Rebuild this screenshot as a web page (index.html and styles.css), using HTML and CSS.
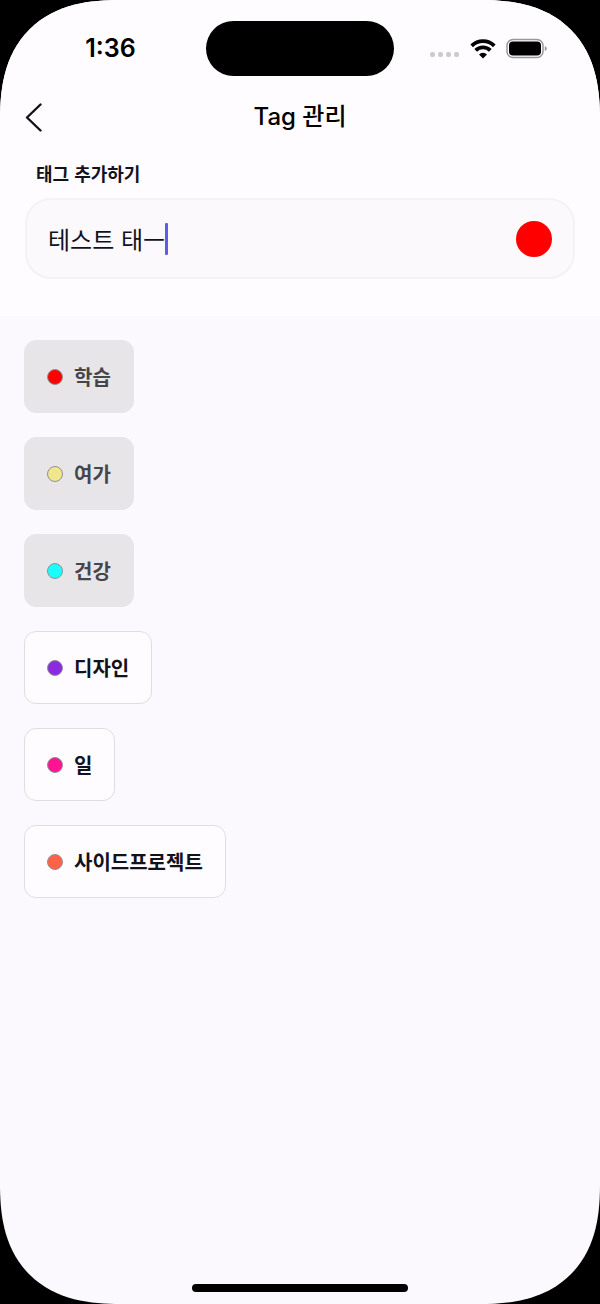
FILE: index.html
```html
<!DOCTYPE html>
<html lang="ko">
<head>
  <meta charset="UTF-8">
  <meta name="viewport" content="width=device-width, initial-scale=1.0">
  <title>Tag 관리</title>
  <link rel="stylesheet" href="styles.css">
</head>
<body>
  <div class="screen">
    <div class="top">
      <div class="status-bar">
        <div class="time">1:36</div>
        <div class="island"></div>
        <div class="status-icons">
          <svg class="signal" width="30" height="22" viewBox="0 0 30 22">
            <g fill="#cbcacd">
              <rect x="0" y="14" width="5" height="5" rx="2"/>
              <rect x="8" y="14" width="5" height="5" rx="2"/>
              <rect x="16" y="14" width="5" height="5" rx="2"/>
              <rect x="24" y="14" width="5" height="5" rx="2"/>
            </g>
          </svg>
          <svg class="wifi" width="26" height="22" viewBox="0 0 26 22">
            <g fill="none" stroke="#000" stroke-width="3.8">
              <path d="M1.7 7.8 A16.2 16.2 0 0 1 24.3 7.8"/>
              <path d="M5.7 12.4 A10.3 10.3 0 0 1 20.3 12.4"/>
            </g>
            <path d="M13 20.4 L9 16.4 A5.7 5.7 0 0 1 17 16.4 Z" fill="#000"/>
          </svg>
          <svg class="battery" width="42" height="22" viewBox="0 0 42 22">
            <rect x="1" y="1.5" width="36" height="18" rx="6" fill="none" stroke="#98979a" stroke-width="1.5"/>
            <rect x="3" y="3.5" width="32" height="14" rx="4" fill="#000"/>
            <path d="M38.8 8 Q40.8 8.8 40.8 10.5 Q40.8 12.2 38.8 13 Z" fill="#98979a"/>
          </svg>
        </div>
      </div>

      <header class="nav">
        <button class="back" type="button" aria-label="뒤로">
          <svg width="18" height="30" viewBox="0 0 18 30">
            <path d="M16.5 2.5 L3 15.5 L16.5 28.5" fill="none" stroke="#12121c" stroke-width="2.4" stroke-linecap="round" stroke-linejoin="round"/>
          </svg>
        </button>
        <h1 class="title">Tag 관리</h1>
      </header>

      <form class="add-form">
        <label class="add-label" for="tagName">태그 추가하기</label>
        <div class="field">
          <div class="typing">
            <input class="tag-input" type="text" id="tagName" value="테스트 태ㅡ">
            <span class="caret"></span>
          </div>
          <button class="color-pick" type="button" aria-label="색상"></button>
        </div>
      </form>
    </div>

    <main class="tags">
      <button class="tag selected" type="button"><span class="dot red"></span>학습</button>
      <button class="tag selected" type="button"><span class="dot khaki"></span>여가</button>
      <button class="tag selected" type="button"><span class="dot cyan"></span>건강</button>
      <button class="tag" type="button"><span class="dot violet"></span>디자인</button>
      <button class="tag" type="button"><span class="dot pink"></span>일</button>
      <button class="tag" type="button"><span class="dot tomato"></span>사이드프로젝트</button>
    </main>

    <div class="home-bar"></div>
  </div>
</body>
</html>
```
FILE: styles.css
```css
* {
  box-sizing: border-box;
}
body {
  margin: 0;
  background-color: #000;
  color: #12121c;
  font-family: "Noto Sans CJK KR", sans-serif;
}
button, input {
  font-family: inherit;
  color: inherit;
  border: none;
  padding: 0;
  background: none;
}
button {
  cursor: pointer;
}
svg {
  display: block;
}
.screen {
  min-height: 100vh;
  display: flex;
  flex-direction: column;
  background-color: #fbf9fd;
  border-radius: 100px;
  overflow: hidden;
}
/* smoother device corner where the browser can draw it */
@supports (corner-shape: superellipse(1.3)) {
  .screen {
    border-radius: 120px;
    corner-shape: superellipse(1.3);
  }
}
.top {
  background-color: #fefcff;
  padding-bottom: 37px;
}

/* status bar */
.status-bar {
  display: grid;
  grid-template-columns: 1fr 188px 1fr;
  align-items: center;
  padding-top: 21px;
}
.time {
  padding-left: 15px;
  text-align: center;
  font-family: Inter, sans-serif;
  font-size: 25px;
  font-weight: 600;
  line-height: 55px;
  color: #000;
}
.island {
  height: 55px;
  border-radius: 28px;
  background-color: #000;
}
.status-icons {
  display: flex;
  align-items: center;
  justify-content: flex-end;
  gap: 10px;
  padding-right: 52px;
}

/* title row */
.nav {
  display: grid;
  grid-template-columns: 1fr auto 1fr;
  align-items: center;
  padding: 21px 24px 0;
}
.back {
  justify-self: start;
}
.title {
  margin: 0;
  font-family: Inter, "Noto Sans CJK KR", sans-serif;
  font-size: 24px;
  font-weight: 500;
  line-height: 40px;
  color: #000;
}

/* add form */
.add-form {
  padding: 23px 25px 0;
}
.add-label {
  display: block;
  padding-left: 11px;
  margin-bottom: 12px;
  font-size: 18px;
  font-weight: 700;
  line-height: 26px;
}
.field {
  display: flex;
  align-items: center;
  justify-content: space-between;
  height: 81px;
  padding: 0 21px;
  border: 2px solid #f4f2f5;
  border-radius: 26px;
  background-color: #fbf9fc;
}
.typing {
  display: flex;
  align-items: center;
}
.tag-input {
  field-sizing: content;
  font-size: 24px;
  line-height: 34px;
  outline: none;
}
.caret {
  width: 3px;
  height: 32px;
  border-radius: 1px;
  background-color: #625bea;
}
.color-pick {
  width: 36px;
  height: 36px;
  border-radius: 50%;
  background-color: #ff0000;
}

/* tag list */
.tags {
  flex: 1;
  display: flex;
  flex-direction: column;
  align-items: flex-start;
  gap: 24px;
  padding: 24px;
}
.tag {
  display: flex;
  align-items: center;
  gap: 11px;
  padding: 23px 22px;
  border: 1px solid #dfdde1;
  border-radius: 12px;
  background-color: #fefcff;
  font-size: 20px;
  font-weight: 700;
  line-height: 25px;
}
.tag.selected {
  border-color: #e7e5e8;
  background-color: #e7e5e8;
  color: #464549;
}
.dot {
  width: 16px;
  height: 16px;
  border: 1px solid #929194;
  border-radius: 50%;
}
.red {
  background-color: #ff0000;
}
.khaki {
  background-color: #f0e68c;
}
.cyan {
  background-color: #18ffff;
}
.violet {
  background-color: #8a2be2;
}
.pink {
  background-color: #ff1493;
}
.tomato {
  background-color: #ff6347;
}

.home-bar {
  align-self: center;
  width: 36%;
  height: 8px;
  margin-bottom: 12px;
  border-radius: 4px;
  background-color: #000;
}
```
